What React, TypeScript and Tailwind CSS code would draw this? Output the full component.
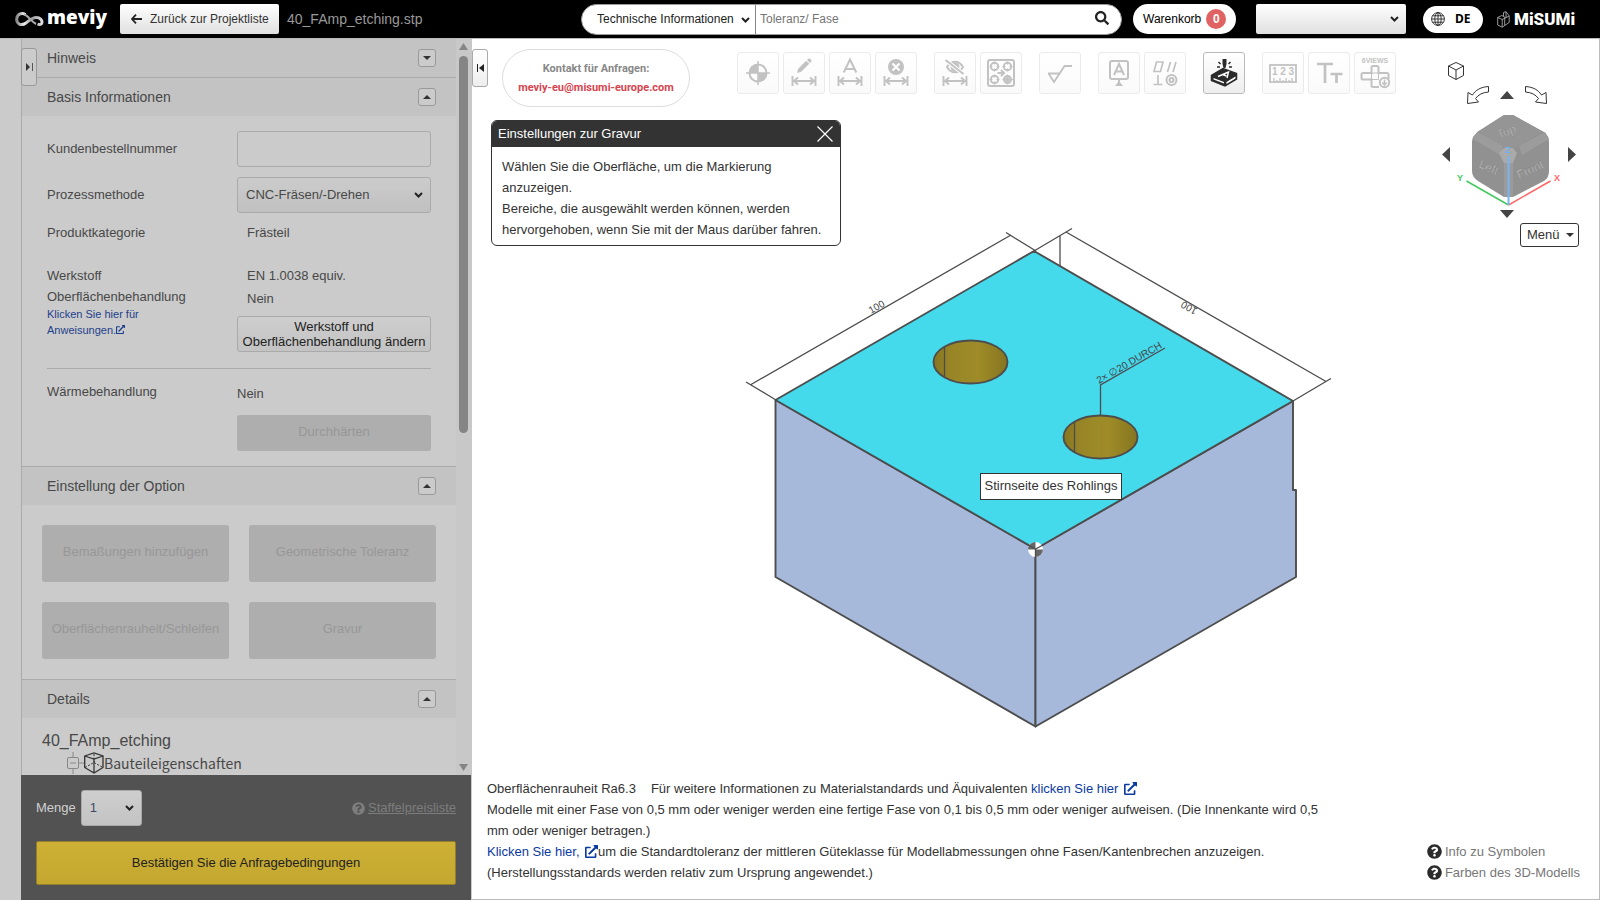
import type { ReactNode } from "react";
import { FaExternalLinkAlt, FaQuestionCircle, FaSearch } from "react-icons/fa";

function Chevron({ className = "" }: { className?: string }) {
  return (
    <svg viewBox="0 0 9 6" className={`pointer-events-none absolute h-[6px] w-[9px] ${className}`} aria-hidden="true">
      <path d="M1 1l3.5 3.5L8 1" fill="none" stroke="#222" strokeWidth="2" />
    </svg>
  );
}

function Triangle({ dir, className }: { dir: "up" | "down" | "left" | "right"; className: string }) {
  const points = {
    up: "0,10 5,0 10,10",
    down: "0,0 10,0 5,10",
    left: "10,0 10,10 0,5",
    right: "0,0 10,5 0,10",
  }[dir];
  return (
    <svg viewBox="0 0 10 10" preserveAspectRatio="none" className={className} aria-hidden="true">
      <polygon points={points} fill="currentColor" />
    </svg>
  );
}

function Header() {
  return (
    <header className="flex h-[39px] shrink-0 items-center border-b border-[#bbb] bg-black pr-7 pl-[15px] text-[12px]">
      <a href="#" aria-label="meviy" className="flex w-[105px] items-center gap-[3px] text-white">
        <svg viewBox="0 0 29 15" className="h-[15px] w-[29px]" aria-hidden="true">
          <defs>
            <linearGradient id="swirl" x1="0" x2="1">
              <stop offset="0" stopColor="#888" />
              <stop offset="0.3" stopColor="#eee" />
              <stop offset="0.6" stopColor="#999" />
              <stop offset="1" stopColor="#ddd" />
            </linearGradient>
          </defs>
          <path
            d="M10.500 2.500C7.500.5 2 1.500 1.700 7c-.2 5 4 6.500 7.500 5 4-1.800 7-6.500 12-6.500 4 0 6 2.500 5.800 5-.3 2-2.500 2.500-4.500 1.500"
            fill="none"
            stroke="url(#swirl)"
            strokeWidth="3"
          />
          <path d="M9 2.500c4 .5 7 7 12 9.500" fill="none" stroke="#aaa" strokeWidth="2" />
        </svg>
        <span className="-mt-1 font-['Open_Sans'] text-[19px] leading-6 font-extrabold">meviy</span>
      </a>
      <button className="flex h-[30px] w-[159px] items-center gap-2 rounded-xs bg-linear-to-b from-white to-[#e0e0e0] pl-[11px] text-[#333]">
        <svg viewBox="0 0 11 10" className="h-[10px] w-[11px]" aria-hidden="true">
          <path d="M5 .7L1 5l4 4.300M1 5h10" fill="none" stroke="#222" strokeWidth="1.800" />
        </svg>
        Zurück zur Projektliste
      </button>
      <span className="ml-2 text-[14px] text-[#999]">40_FAmp_etching.stp</span>

      <div className="ml-auto flex h-[31px] w-[541px] overflow-hidden rounded-full border border-[#999] bg-white">
        <div className="relative w-[174px] border-r border-[#888]">
          <select aria-label="Suchbereich" className="h-full w-full appearance-none bg-transparent pl-[15px] text-[#222]">
            <option>Technische Informationen</option>
          </select>
          <Chevron className="top-[12px] right-[5px]" />
        </div>
        <input
          aria-label="Suche"
          placeholder="Toleranz/ Fase"
          className="min-w-0 flex-1 px-1 outline-none placeholder:text-[#757575]"
        />
        <button aria-label="Suchen" className="pr-[12px] pb-[3px] text-[14px] text-[#222]">
          <FaSearch />
        </button>
      </div>
      <button className="ml-[11px] flex h-[30px] w-[103px] items-center gap-[5px] rounded-full bg-white pl-[10px] text-black">
        Warenkorb
        <span className="flex h-5 w-5 items-center justify-center rounded-full bg-[#e06262] font-bold text-white">0</span>
      </button>
      <div className="relative ml-5 h-[30px] w-[150px]">
        <select
          aria-label="Konto"
          className="h-full w-full appearance-none rounded-xs bg-linear-to-b from-white to-[#e0e0e0] pl-3"
        >
          <option></option>
        </select>
        <Chevron className="top-[12px] right-[7px]" />
      </div>
      <button className="ml-[17px] flex h-[27px] w-[60px] items-center gap-[10px] rounded-full bg-white pl-2 font-['Noto_Sans'] text-[12px] font-bold text-black">
        <svg viewBox="0 0 14 14" className="h-[14px] w-[14px]" fill="none" stroke="#222" strokeWidth="0.900" aria-hidden="true">
          <circle cx="7" cy="7" r="6.400" />
          <ellipse cx="7" cy="7" rx="3.200" ry="6.400" />
          <path d="M7 .6v12.800M.6 7h12.800M1.500 3.800h11M1.500 10.200h11" />
        </svg>
        DE
      </button>
      <a href="#" aria-label="MiSUMi" className="ml-[14px] flex items-center gap-1 text-white">
        <svg viewBox="0 0 13 17" className="h-[17px] w-[13px]" fill="none" stroke="#aaa" strokeWidth="0.900" aria-hidden="true">
          <path d="M.7 6.500l4-2 3 1.500v8.500l-2.500 1.700L.7 14zM.7 6.500l4.500 2V16M5.200 8.500l7-3.500v6.500l-4.500 3M6.500 5V1.500L9 .7v6M9 .7l3.300 4.300" />
        </svg>
        <span className="w-[58px] font-['Roboto'] text-[17px] leading-5 font-black whitespace-nowrap">MiSUMi</span>
      </a>
    </header>
  );
}

function SectionHeader({ title, open = true }: { title: string; open?: boolean }) {
  return (
    <div className="flex h-[38px] items-center justify-between bg-[#c3c3c3] pr-5 pl-[25px]">
      <h2 className="text-[14px] text-[#484848]">{title}</h2>
      <button
        aria-label={title}
        className="flex h-[18px] w-[18px] items-center justify-center rounded-[3px] border border-[#999] bg-[#cbcbcb] text-[#333]"
      >
        <Triangle dir={open ? "up" : "down"} className="h-1 w-2" />
      </button>
    </div>
  );
}

function DisabledButton({ children, className }: { children: ReactNode; className: string }) {
  return (
    <button disabled className={`rounded-[3px] bg-[#aeaeae] pb-[3px] text-[13px] text-[#979797] ${className}`}>
      {children}
    </button>
  );
}

function Sidebar() {
  return (
    <aside className="relative flex w-[451px] shrink-0 flex-col bg-[#cbcbcb] text-[13px] leading-5 text-[#484848]">
      <button
        aria-label="Seitenleiste einklappen"
        className="absolute top-[9px] left-0 flex h-[38px] w-4 items-center justify-center gap-[2px] rounded-[3px] border border-[#999] bg-[#cbcbcb] text-[#333]"
      >
        <Triangle dir="right" className="h-2 w-1" />
        <span className="h-2 w-px bg-[#555]" />
      </button>
      <div className="flex min-h-0 flex-1">
        <div className="flex-1 overflow-hidden border-l border-[#aaa]">
          <SectionHeader title="Hinweis" open={false} />
          <div className="border-t border-[#aaa]">
            <SectionHeader title="Basis Informationen" />
          </div>
          <div className="px-[25px] py-[15px]">
            <div className="flex items-center">
              <label htmlFor="order" className="w-[190px]">
                Kundenbestellnummer
              </label>
              <input id="order" className="h-9 w-[194px] rounded-[3px] border border-[#aaa] px-2" />
            </div>
            <div className="mt-[10px] flex items-center">
              <label htmlFor="process" className="w-[190px]">
                Prozessmethode
              </label>
              <div className="relative h-9 w-[194px]">
                <select
                  id="process"
                  className="h-full w-full appearance-none rounded-[3px] border border-[#aaa] bg-linear-to-b from-[#cccccc] to-[#c0c0c0] pl-2"
                >
                  <option>CNC-Fräsen/-Drehen</option>
                </select>
                <Chevron className="top-[15px] right-[8px]" />
              </div>
            </div>
            <div className="mt-[10px] flex">
              <span className="w-[200px]">Produktkategorie</span>
              <span>Frästeil</span>
            </div>
            <div className="mt-[21px] flex">
              <div className="w-[190px]">
                <div className="leading-6">Werkstoff</div>
                <div className="leading-[18px]">Oberflächenbehandlung</div>
                <a href="#" className="block w-[120px] text-[11px] leading-4 text-[#1f3f8c]">
                  Klicken Sie hier für Anweisungen.
                  <FaExternalLinkAlt className="inline h-[9px] w-[9px] align-baseline" />
                </a>
              </div>
              <div className="w-[194px]">
                <div className="pl-[10px] leading-[23px]">EN 1.0038 equiv.</div>
                <div className="pl-[10px] leading-[23px]">Nein</div>
                <button className="mt-[6px] flex h-9 w-full items-center justify-center rounded-[3px] border border-[#aaa] bg-linear-to-b from-[#cecece] to-[#c3c3c3] leading-[15px] whitespace-nowrap text-[#222]">
                  Werkstoff und
                  <br />
                  Oberflächenbehandlung ändern
                </button>
              </div>
            </div>
            <hr className="mt-4 border-[#aaa]" />
            <div className="mt-[13px] flex">
              <span className="w-[190px]">Wärmebehandlung</span>
              <div className="w-[194px] pt-[2px]">
                <div>Nein</div>
                <DisabledButton className="mt-[11px] h-9 w-full">Durchhärten</DisabledButton>
              </div>
            </div>
          </div>
          <div className="border-t border-[#aaa]">
            <SectionHeader title="Einstellung der Option" />
          </div>
          <div className="grid grid-cols-2 gap-5 p-5">
            <DisabledButton className="h-[57px]">Bemaßungen hinzufügen</DisabledButton>
            <DisabledButton className="h-[57px]">Geometrische Toleranz</DisabledButton>
            <DisabledButton className="h-[57px]">Oberflächenrauheit/Schleifen</DisabledButton>
            <DisabledButton className="h-[57px]">Gravur</DisabledButton>
          </div>
          <div className="border-t border-[#aaa]">
            <SectionHeader title="Details" />
          </div>
          <div className="pt-[11px] pl-5">
            <div className="text-[16px] leading-[23px]">40_FAmp_etching</div>
            <div className="flex items-center pl-[25px] font-['Noto_Sans_CJK_JP',sans-serif] text-[14px] leading-[22px]">
              <svg viewBox="0 0 37 22" className="h-[22px] w-[37px]" fill="none" stroke="#888" aria-hidden="true">
                <rect x=".5" y="5.500" width="11" height="11" rx="1.500" />
                <path d="M3 11h6M6 0v5M6 17v5M12 11h5" />
                <g stroke="#333" strokeWidth="1.300">
                  <path d="M17.700 4L27 1l9 3v11.500L27 21l-9.300-5.500zM17.700 4L27 7l9-3M27 7v14" />
                  <path d="M18 15.500l9-5 9 5M27 2v8" strokeDasharray="2 1.500" strokeWidth="1" />
                </g>
              </svg>
              <span>Bauteileigenschaften</span>
            </div>
          </div>
        </div>
        <div className="flex w-4 flex-col items-center bg-[#c8c8c8] pt-1 pr-px pb-1 text-[#858585]">
          <Triangle dir="up" className="h-[7px] w-[9px]" />
          <div className="mt-[6px] h-[377px] w-[9px] rounded-full bg-[#858585]" />
          <Triangle dir="down" className="mt-auto h-[7px] w-[9px]" />
        </div>
      </div>
      <div className="mr-px h-[125px] shrink-0 bg-[#525252] px-[15px] pt-[15px]">
        <div className="flex h-9 items-center">
          <label htmlFor="qty" className="text-[#d0d0d0]">
            Menge
          </label>
          <div className="relative ml-[5px] h-9 w-[61px]">
            <select
              id="qty"
              className="h-full w-full appearance-none rounded-[3px] border border-[#aaa] bg-linear-to-b from-[#cecece] to-[#c3c3c3] pl-[8px] text-[13px] text-[#3f4a63]"
            >
              <option>1</option>
            </select>
            <Chevron className="top-[15px] right-[8px]" />
          </div>
          <a href="#" className="ml-auto flex items-center gap-[3px] text-[#7d7d7d]">
            <FaQuestionCircle />
            <span className="underline">Staffelpreisliste</span>
          </a>
        </div>
        <button className="mt-[15px] h-11 w-full rounded-xs border border-[#94802a] bg-linear-to-b from-[#cdb035] to-[#c4a72f] text-[#222]">
          Bestätigen Sie die Anfragebedingungen
        </button>
      </div>
    </aside>
  );
}

const dim = (
  <path d="M4.500 23v10M27.500 23v10M6 28h20M10 24.500L6 28l4 3.500M22 24.500l4 3.500-4 3.500" strokeWidth="1.900" />
);

const toolGroups: { label: string; active?: boolean; icon: ReactNode }[][] = [
  [
    {
      label: "Ursprung",
      icon: (
        <>
          <circle cx="16" cy="20" r="8.500" />
          <path d="M16 8v24M4 20h24" strokeWidth="1.500" />
          <path d="M16 20V11.500A8.500 8.500 0 007.500 20zM16 20v8.500A8.500 8.500 0 0024.500 20z" fill="currentColor" stroke="none" />
        </>
      ),
    },
    {
      label: "Maß bearbeiten",
      icon: (
        <>
          {dim}
          <path d="M9 20l1.200-4.200 8-8 3 3-8 8zM19 7l1.500-1.300c1.300-.8 3.700 1.500 2.800 2.800L22 10z" fill="currentColor" stroke="none" />
        </>
      ),
    },
    {
      label: "Maßtext",
      icon: (
        <>
          {dim}
          <path d="M9.700 19.500L16 6.500l6.300 13M12 16h8" />
        </>
      ),
    },
    {
      label: "Maß löschen",
      icon: (
        <>
          {dim}
          <circle cx="16" cy="14" r="8" fill="currentColor" stroke="none" />
          <path d="M12.500 10.500l7 7M19.500 10.500l-7 7" stroke="#fff" />
        </>
      ),
    },
  ],
  [
    {
      label: "Maß ausblenden",
      icon: (
        <>
          {dim}
          <path d="M8 14c4-7 12-7 16 0-4 7-12 7-16 0z" />
          <circle cx="16" cy="14" r="3.500" fill="currentColor" />
          <path d="M6.500 7l18 14" stroke="#fff" strokeWidth="4" />
          <path d="M6.500 7l18 14" />
        </>
      ),
    },
    {
      label: "Bohrungen",
      icon: (
        <>
          <rect x="3" y="7" width="26" height="26" rx="2" />
          <circle cx="9.500" cy="13.500" r="3.700" />
          <circle cx="22.500" cy="13.500" r="3.700" />
          <circle cx="9.500" cy="26.500" r="3.700" />
          <circle cx="22.500" cy="26.500" r="3.500" />
          <circle cx="22.500" cy="26.500" r="1.500" fill="currentColor" />
          <path d="M9.500 8.500v3M9.500 15.500v3M4.500 13.500h3M11.500 13.500h3M22.500 8.500v3M22.500 15.500v3M17.500 13.500h3M24.500 13.500h3M9.500 21.500v3M9.500 28.500v3M4.500 26.500h3M11.500 26.500h3M22.500 21.500v2M17.500 26.500h2M27 26.500h1M22.500 30v1.500" strokeWidth="1" />
          <path d="M12.500 20h6M16 17l3 3-3 3" />
        </>
      ),
    },
  ],
  [{ label: "Rauheit", icon: <path d="M4 20.500h12.500M4.500 20.500l5.500 8.500L20.500 13H28" strokeWidth="1.800" /> }],
  [
    {
      label: "Bezug",
      icon: (
        <>
          <rect x="7" y="8" width="18" height="18" rx="2" />
          <path d="M11 22l5-11 5 11M12.500 18.500h7M16 26v4" />
          <path d="M12 33l4-5 4 5z" fill="currentColor" stroke="none" />
        </>
      ),
    },
    {
      label: "Geometrische Toleranz",
      icon: (
        <>
          <path d="M5 18.500L7.500 9H14l-2.500 9.500zM18.500 19l3-10M24 19l3-10M9 22v9.500M4.500 31.500h9" strokeWidth="1.700" />
          <circle cx="22.500" cy="27" r="5" />
          <circle cx="22.500" cy="27" r="2" />
        </>
      ),
    },
  ],
  [
    {
      label: "Gravur",
      active: true,
      icon: (
        <>
          <path d="M14.500 6h4v5l-1 4h-2l-1-4z" fill="currentColor" stroke="none" />
          <path d="M10.500 9l2 2M22.500 9l-2 2M9 14h3M21 14h3" strokeWidth="1.500" />
          <path d="M3.500 22.500L15 15.500l13.500 5v5.500L17 33 3.500 27.500z" fill="currentColor" strokeWidth="1.500" />
          <path d="M5.500 25v1.500l10.500 4V29zM18.500 29l9-5.500v2l-9 5.500z" fill="#fff" stroke="none" />
          <path d="M10 23.500l10.500-4.500-1.500 6M14.500 21.500l4 1.500" stroke="#fff" strokeWidth="1.400" />
        </>
      ),
    },
  ],
  [
    {
      label: "Maßzahlen",
      icon: (
        <>
          <rect x="3" y="12" width="26" height="17" strokeWidth="1.800" />
          <path d="M7 29v-4M10 29v-2M13 29v-4M16 29v-2M19 29v-4M22 29v-2M25 29v-4" strokeWidth="1.300" />
          <text x="16" y="22" textAnchor="middle" fontSize="10" fontWeight="700" fill="currentColor" stroke="none">
            1 2 3
          </text>
        </>
      ),
    },
    { label: "Textgröße", icon: <path d="M4 11h16M12 11v19M17.500 21h12M23.500 21v9" strokeWidth="2.700" /> },
    {
      label: "6 Ansichten",
      icon: (
        <>
          <text x="16" y="10" textAnchor="middle" fontSize="7" fontWeight="700" fill="currentColor" stroke="none">
            6VIEWS
          </text>
          <path
            d="M14 13h4q1.500 0 1.500 1.500V20H28q1.500 0 1.500 1.500V26M20 34h-6q-1.500 0-1.500-1.500V26.500H4q-1.500 0-1.500-1.500v-3.500Q2.500 20 4 20h8.500v-5.500Q12.500 13 14 13"
            strokeWidth="2"
          />
          <path d="M12.500 20h7v6.500h-7z" strokeWidth="1" />
          <circle cx="25.500" cy="29.500" r="4.700" fill="#fafafa" />
          <path d="M25.500 26.500v5M23.300 29.500l2.200 2.500 2.200-2.500" strokeWidth="1.500" />
        </>
      ),
    },
  ],
];

function Toolbar() {
  return (
    <div className="ml-[47px] flex gap-[17px] pt-[3px]" role="toolbar">
      {toolGroups.map((group, i) => (
        <div key={i} className="flex gap-1">
          {group.map((tool) => (
            <button
              key={tool.label}
              aria-label={tool.label}
              className={
                tool.active
                  ? "flex h-[42px] w-[42px] items-center justify-center rounded-[3px] border border-[#bbb] bg-linear-to-b from-white to-[#eee] text-[#2b2b2b]"
                  : "flex h-[42px] w-[42px] items-center justify-center rounded-[3px] border border-[#ebebeb] bg-linear-to-b from-white to-[#fafafa] text-[#c2c2c2]"
              }
            >
              <svg viewBox="0 0 32 40" className="h-10 w-8" fill="none" stroke="currentColor" strokeWidth="2" aria-hidden="true">
                {tool.icon}
              </svg>
            </button>
          ))}
        </div>
      ))}
    </div>
  );
}

function Model() {
  return (
    <svg viewBox="0 0 600 510" className="h-[510px] w-[600px]" fill="none" stroke="#4d4d4d" strokeWidth="1.300">
      <defs>
        <linearGradient id="bore">
          <stop offset="0" stopColor="#857520" />
          <stop offset="0.2" stopColor="#978426" />
          <stop offset="0.6" stopColor="#9f8c28" />
          <stop offset="1" stopColor="#857520" />
        </linearGradient>
      </defs>
      <g strokeWidth="1.900" strokeLinejoin="round">
        <path d="M35.500 180L295.500 329v177.500L35.500 357z" fill="#a7b9da" />
        <path d="M295.500 329L553 181v89h3v87L295.500 506.500z" fill="#a7b9da" />
        <path d="M294 31L553 181 295.500 329 35.500 180z" fill="#45d9ec" />
        <ellipse cx="230.500" cy="142" rx="37" ry="21.500" fill="url(#bore)" />
        <ellipse cx="360.500" cy="217" rx="37" ry="21.500" fill="url(#bore)" />
      </g>
      <path d="M204.500 127v30M334.500 202v30" />
      <path d="M11 164.500L271 15M6 162l30 18M266 12.500L296 31" />
      <path d="M326 12l260 149.500M294 31l38-22.500M553 181l38-22.500M320 15v31" />
      <path d="M360.500 195.500V165L425 128" />
      <g fill="#444" stroke="none" fontSize="10">
        <text transform="translate(131 94) rotate(-30)">100</text>
        <text transform="translate(458 89) rotate(210)">100</text>
        <text transform="translate(359 164) rotate(-30)">2× ∅20 DURCH</text>
      </g>
      <g stroke="none">
        <circle cx="295.500" cy="329.500" r="7.500" fill="#fff" />
        <path d="M295.500 329.500V322a7.500 7.500 0 00-7.500 7.500zM295.500 329.500v7.500a7.500 7.500 0 007.500-7.500z" fill="#666" />
      </g>
      <path d="M288 325l7.500 4 7.500-4M295.500 329v8" />
    </svg>
  );
}

function ViewNavigator() {
  return (
    <nav aria-label="Ansicht" className="flex w-[134px] flex-col text-[#444]">
      <button aria-label="Isometrische Ansicht" className="ml-1 w-[20px]">
        <svg viewBox="0 0 20 20" className="h-5 w-5" fill="none" stroke="#333" aria-hidden="true">
          <path d="M10 1.500l7.500 3.500v9.500L10 18.500l-7.500-4V5zM2.500 5L10 9l7.500-4M10 9v9.500" />
        </svg>
      </button>
      <div className="mt-1 flex items-center justify-center gap-[10px] pr-1">
        <button aria-label="Nach links drehen">
          <svg viewBox="0 0 24 20" className="h-5 w-6" fill="#fff" stroke="#333" aria-hidden="true">
            <path d="M22.500 1.500C15 2 9.500 5 6.500 10L2 7.500 1.500 18.500l11-1.500-3-3.500c3-4 7-6 13-6.500z" />
          </svg>
        </button>
        <button aria-label="Nach oben">
          <Triangle dir="up" className="h-2 w-[14px]" />
        </button>
        <button aria-label="Nach rechts drehen">
          <svg viewBox="0 0 24 20" className="h-5 w-6" fill="#fff" stroke="#333" aria-hidden="true">
            <path d="M1.500 1.500C9 2 14.500 5 17.500 10L22 7.500l.5 11-11-1.500 3-3.500c-3-4-7-6-13-6.500z" />
          </svg>
        </button>
      </div>
      <div className="mt-1 flex justify-between">
        <button aria-label="Nach links" className="-mt-2">
          <Triangle dir="left" className="h-[15px] w-2" />
        </button>
        <svg viewBox="0 0 110 98" className="h-[98px] w-[110px]" aria-hidden="true">
          <path d="M50 6h9l31 17q5 4 5 10v29q0 7-5 10L59 88h-9L24 72q-6-4-6-10V33q0-6 6-10z" fill="#919191" />
          <path d="M50 6h9l30 17-25 14q-8 3-16 0L23 23z" fill="#959595" />
          <path d="M19 30l4-7 26 14-3 9zM95 30l-4-7-26 14 3 9z" fill="#9c9c9c" />
          <path d="M50 53h9v35h-9z" fill="#9b9b9b" />
          <path d="M50 39h9l4 5-4 10h-9l-5-10z" fill="#aaa" />
          <g fill="#c4c4c4" stroke="#777" strokeWidth="0.300" fontSize="12">
            <text transform="translate(45 30) rotate(-22)">Top</text>
            <text transform="translate(24 58) rotate(24)">Left</text>
            <text transform="translate(65 70) rotate(-24)">Front</text>
          </g>
          <path d="M54.500 96l-42-24" stroke="#45c95f" strokeWidth="1.500" />
          <path d="M54.500 96l42-24" stroke="#f66" strokeWidth="1.500" />
          <path d="M54.500 96V47" stroke="#77b5f0" strokeWidth="2" />
          <g fontSize="9">
            <text x="51" y="44" fill="#6fb2f2" fontWeight="700">
              Z
            </text>
            <text x="3" y="72" fill="#45c95f" fontWeight="700">
              Y
            </text>
            <text x="100" y="72" fill="#f66" fontWeight="700">
              X
            </text>
          </g>
        </svg>
        <button aria-label="Nach rechts" className="-mt-2">
          <Triangle dir="right" className="h-[15px] w-2" />
        </button>
      </div>
      <button aria-label="Nach unten" className="mt-[3px] mr-1 self-center">
        <Triangle dir="down" className="h-2 w-[14px]" />
      </button>
      <button className="mt-[5px] -mr-[3px] flex h-6 w-[59px] items-center justify-between self-end rounded-[3px] border border-[#333] bg-white pr-1 pl-[6px] text-[13px] text-[#333]">
        Menü
        <Triangle dir="down" className="h-1 w-2" />
      </button>
    </nav>
  );
}

function Dialog() {
  return (
    <section role="dialog" aria-label="Einstellungen zur Gravur" className="w-[350px] overflow-hidden rounded-md border border-[#333] bg-white text-[13px] text-[#333]">
      <div className="flex h-[26px] items-center justify-between bg-[#333] pr-[7px] pl-[6px] text-white">
        <h2>Einstellungen zur Gravur</h2>
        <button aria-label="Schließen">
          <svg viewBox="0 0 16 16" className="h-4 w-4" stroke="#fff" strokeWidth="1.200" aria-hidden="true">
            <path d="M.5.5l15 15M15.500.5l-15 15" />
          </svg>
        </button>
      </div>
      <p className="px-[10px] pt-[9px] pb-[5px] leading-[21px]">
        Wählen Sie die Oberfläche, um die Markierung anzuzeigen.
        <br />
        Bereiche, die ausgewählt werden können, werden hervorgehoben, wenn Sie mit der Maus darüber fahren.
      </p>
    </section>
  );
}

export default function App() {
  return (
    <div className="flex h-screen min-h-[700px] flex-col overflow-hidden font-['Liberation_Sans',Arial,sans-serif]">
      <Header />
      <div className="flex min-h-0 flex-1 bg-[#cbcbcb] pl-[21px]">
        <Sidebar />
        <main className="relative flex min-w-0 flex-1 flex-col border-r border-b border-[#bbb] bg-white text-[13px] text-[#333]">
          <div className="absolute inset-0 flex items-center justify-center pt-3 pl-2">
            <div className="relative">
              <Model />
              <div
                role="tooltip"
                className="absolute top-[253px] left-[240px] h-[27px] border border-[#333] bg-white px-1 leading-6 whitespace-nowrap"
              >
                Stirnseite des Rohlings
              </div>
            </div>
          </div>
          <div className="relative flex items-start pt-[10px]">
            <button
              aria-label="Seitenleiste ausklappen"
              className="flex h-[38px] w-4 items-center justify-center gap-px rounded-[3px] border border-[#aaa] bg-linear-to-b from-white to-[#eee] text-[#222]"
            >
              <span className="h-2 w-px bg-[#222]" />
              <Triangle dir="left" className="h-2 w-[5px]" />
            </button>
            <div className="ml-[14px] flex h-[58px] w-[188px] flex-col items-center justify-center rounded-full border border-[#ddd] bg-white font-['Roboto',sans-serif] text-[11px] leading-[19px] font-bold">
              <span className="text-[#888]">Kontakt für Anfragen:</span>
              <a href="mailto:meviy-eu@misumi-europe.com" className="text-[#d64550]">
                meviy-eu@misumi-europe.com
              </a>
            </div>
            <Toolbar />
          </div>
          <div className="relative flex flex-1 items-start justify-between pr-[23px] pl-[19px]">
            <div className="pt-[13px]">
              <Dialog />
            </div>
            <div className="-mt-[46px]">
              <ViewNavigator />
            </div>
          </div>
          <footer className="relative flex items-end justify-between pr-[19px] pb-[16px] pl-[15px] leading-[21px]">
            <div className="max-w-[845px]">
              <p>
                <span className="mr-[15px]">Oberflächenrauheit Ra6.3</span>
                Für weitere Informationen zu Materialstandards und Äquivalenten{" "}
                <a href="#" className="text-[#0a3aa0]">
                  klicken Sie hier <FaExternalLinkAlt className="ml-[2px] inline align-[-2px]" />
                </a>
              </p>
              <p>
                Modelle mit einer Fase von 0,5 mm oder weniger werden eine fertige Fase von 0,1 bis 0,5 mm oder weniger
                aufweisen. (Die Innenkante wird 0,5 mm oder weniger betragen.)
              </p>
              <p>
                <a href="#" className="text-[#0a3aa0]">
                  Klicken Sie hier, <FaExternalLinkAlt className="ml-[2px] inline align-[-2px]" />
                </a>
                um die Standardtoleranz der mittleren Güteklasse für Modellabmessungen ohne Fasen/Kantenbrechen
                anzuzeigen.
              </p>
              <p>(Herstellungsstandards werden relativ zum Ursprung angewendet.)</p>
            </div>
            <div className="text-[#777]">
              <a href="#" className="flex items-center gap-[3px]">
                <FaQuestionCircle className="h-[15px] w-[15px] text-[#2b2b2b]" /> Info zu Symbolen
              </a>
              <a href="#" className="flex items-center gap-[3px]">
                <FaQuestionCircle className="h-[15px] w-[15px] text-[#2b2b2b]" /> Farben des 3D-Modells
              </a>
            </div>
          </footer>
        </main>
      </div>
    </div>
  );
}
